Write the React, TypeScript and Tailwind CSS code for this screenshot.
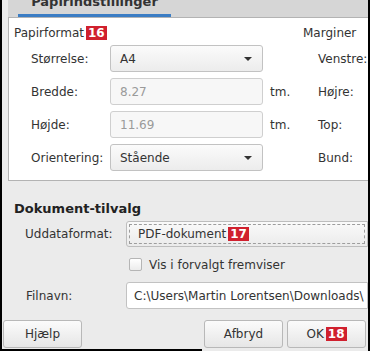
import { Fragment } from "react";

const Badge = ({ n }: { n: string }) => (
  <span className="inline-flex items-center justify-center bg-[#d0202e] text-white font-bold text-[12px] leading-none h-[14px] px-[2px] ml-[2px] font-['DejaVu_Sans',sans-serif]">
    {n}
  </span>
);

const Caret = () => (
  <svg width="8" height="4" viewBox="0 0 8 4" className="fill-[#333]">
    <path d="M0 0h8L4 4z" />
  </svg>
);

const rows = [
  { label: "Størrelse:", kind: "select", value: "A4", margin: "Venstre:" },
  { label: "Bredde:", kind: "input", value: "8.27", margin: "Højre:" },
  { label: "Højde:", kind: "input", value: "11.69", margin: "Top:" },
  { label: "Orientering:", kind: "select", value: "Stående", margin: "Bund:" },
];

const btn =
  "w-[79px] h-[28px] shrink-0 rounded-[3px] border border-[#b8b8b8] bg-gradient-to-b from-[#fbfbfb] to-[#e6e6e6] flex items-center justify-center";

export default function App() {
  return (
    <div className="w-[370px] h-[351px] overflow-hidden bg-[#ebebeb] relative border-l-2 border-r-2 border-black text-[12px] text-[#333] font-['DejaVu_Sans',sans-serif]">
      {/* tab strip, title scrolled partly out of view */}
      <div className="ml-[6px] h-[17px] bg-[#d6d6d6] pl-[10px]">
        <div className="w-[153px] h-[17px] flex flex-col">
          <div className="h-[14px] overflow-hidden text-center">
            <div className="text-[13px] font-bold leading-[13px] whitespace-nowrap -mt-[5px]">
              Papirindstillinger
            </div>
          </div>
          <div className="h-[3px] bg-[#3b7dc4]" />
        </div>
      </div>

      {/* paper panel */}
      <div className="ml-[6px] h-[164px] bg-white border-l border-t border-b border-[#b3b3b3] pt-[7px] flex">
        <div className="w-[294px] shrink-0 pl-[5px]">
          <div className="flex items-center h-[15px]">
            <span>Papirformat</span>
            <Badge n="16" />
          </div>
          <div className="mt-[5px] flex flex-col gap-[6px]">
            {rows.map((r) => (
              <div key={r.label} className="flex items-center h-[27px]">
                <div className="w-[96px] shrink-0 pl-[17px] whitespace-nowrap">{r.label}</div>
                {r.kind === "select" ? (
                  <div className="w-[153px] shrink-0 h-[27px] rounded-[3px] border border-[#c2c2c2] bg-gradient-to-b from-[#fbfbfb] to-[#ececec] flex items-center justify-between pl-[9px] pr-[10px]">
                    <span>{r.value}</span>
                    <Caret />
                  </div>
                ) : (
                  <Fragment>
                    <div className="w-[153px] shrink-0 h-[27px] rounded-[3px] border border-[#cfcfcf] bg-[#f7f7f7] flex items-center pl-[9px] text-[#9a9a9a]">
                      {r.value}
                    </div>
                    <span className="ml-[7px]">tm.</span>
                  </Fragment>
                )}
              </div>
            ))}
          </div>
        </div>
        <div className="flex-1 min-w-0">
          <div className="h-[15px] flex items-center">Marginer</div>
          <div className="mt-[5px] flex flex-col gap-[6px]">
            {rows.map((r) => (
              <div key={r.margin} className="h-[27px] flex items-center pl-[15px] whitespace-nowrap">
                {r.margin}
              </div>
            ))}
          </div>
        </div>
      </div>

      {/* document options */}
      <div className="pl-[12px] pt-[18px]">
        <div className="font-bold text-[13px] leading-[19px] text-[#222]">Dokument-tilvalg</div>
        <div className="mt-[3px] flex items-center h-[26px]">
          <div className="w-[112px] shrink-0 pl-[11px]">Uddataformat:</div>
          <div className="flex-1 h-[26px] rounded-l-[3px] border border-[#bdbdbd] bg-gradient-to-b from-[#fafafa] to-[#ebebeb] p-[2px]">
            <div className="h-full border border-dashed border-[#9d9d9d] flex items-center pl-[8px] whitespace-nowrap">
              PDF-dokument
              <Badge n="17" />
            </div>
          </div>
        </div>
        <div className="mt-[11px] flex items-center pl-[115px] h-[13px]">
          <span className="w-[13px] h-[13px] rounded-[2px] border border-[#b5b5b5] bg-gradient-to-b from-white to-[#ececec]" />
          <span className="ml-[7px]">Vis i forvalgt fremviser</span>
        </div>
        <div className="mt-[11px] flex items-center h-[27px]">
          <div className="w-[112px] shrink-0 pl-[12px]">Filnavn:</div>
          <div className="flex-1 h-[27px] rounded-l-[3px] border border-[#c2c2c2] bg-white flex items-center pl-[7px] whitespace-nowrap overflow-hidden">
            C:\Users\Martin Lorentsen\Downloads\
          </div>
        </div>
      </div>

      {/* buttons */}
      <div className="mt-[11px] flex pl-[1px] pr-[2px]">
        <button className={btn}>Hjælp</button>
        <div className="flex-1" />
        <button className={btn}>Afbryd</button>
        <button className={`${btn} ml-[4px]`}>
          OK
          <Badge n="18" />
        </button>
      </div>
      <div className="absolute left-0 bottom-0 w-[200px] h-[2px] bg-black" />
    </div>
  );
}
